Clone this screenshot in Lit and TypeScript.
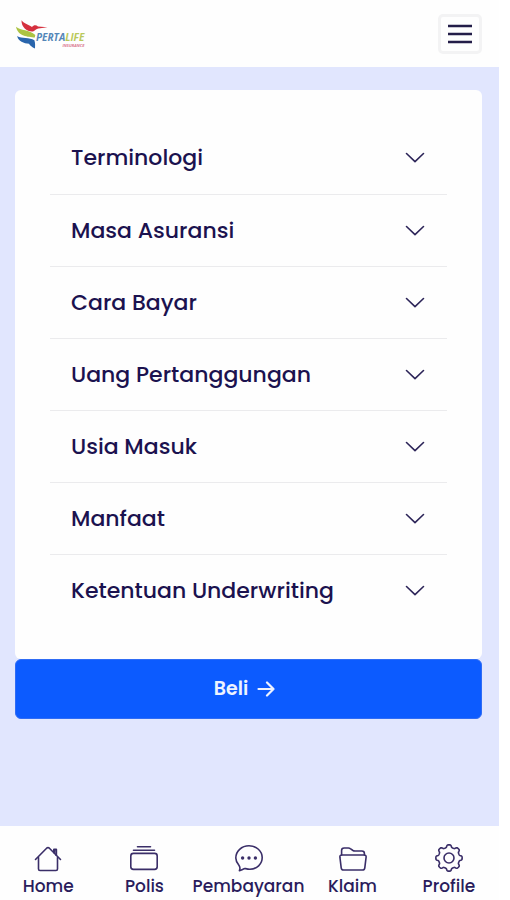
import { LitElement, html, css, svg } from "lit";
import { customElement, state } from "lit/decorators.js";

const SECTIONS = [
  "Terminologi",
  "Masa Asuransi",
  "Cara Bayar",
  "Uang Pertanggungan",
  "Usia Masuk",
  "Manfaat",
  "Ketentuan Underwriting",
];

// Outline of a gear with eight soft teeth, centred in a 28 unit box.
const gearPath = (() => {
  const points: string[] = [];
  for (let i = 0; i < 160; i++) {
    const a = (i / 160) * Math.PI * 2;
    const r = 11.9 + 1.3 * Math.tanh(2.2 * Math.cos(8 * a));
    points.push(`${(14 + r * Math.sin(a)).toFixed(2)} ${(14 - r * Math.cos(a)).toFixed(2)}`);
  }
  return `M${points.join("L")}Z`;
})();

const NAV = [
  {
    label: "Home",
    icon: svg`<path d="M4.5 13.5V25q0 1.5 1.5 1.5h16q1.5 0 1.5-1.5V13.5"/><path d="M1.5 15.5 12.6 4.2q1.4-1.2 2.8 0L26.5 15.5"/><path d="M20 8.5V5.5h2.2v5.4" stroke-width="2"/>`,
  },
  {
    label: "Polis",
    icon: svg`<rect x="0.8" y="9.4" width="26.4" height="16" rx="2.6"/><path d="M3.5 6.2h21M7.5 2.7h13"/>`,
  },
  {
    label: "Pembayaran",
    icon: svg`<path d="M4.4 26.6c.9-2 .8-3.6-.5-5.4C1.8 18.8.8 16.7.8 14 .8 7.2 6.6 1.8 14 1.8S27.2 7 27.2 13.6 21.8 25.2 14.8 25.2c-2 0-3.4-.4-4.8-.7-1.8.5-3.5 1.6-5.6 2.1Z"/><g class="dots"><circle cx="7.6" cy="14" r="1.7"/><circle cx="14" cy="14" r="1.7"/><circle cx="20.4" cy="14" r="1.7"/></g>`,
  },
  {
    label: "Klaim",
    icon: svg`<path d="M2.6 11V6.5q0-2.5 2.5-2.5h4.4q1 0 1.8.6l2.7 1.9q.8.5 1.8.5h7.100q2.5 0 2.5 2.5V11"/><path d="M3 11h22q2.3 0 2.1 2.2l-1.3 10.6q-.3 2.2-2.5 2.2H4.7q-2.2 0-2.5-2.2L.9 13.2Q.7 11 3 11Z"/>`,
  },
  {
    label: "Profile",
    icon: svg`<path d="${gearPath}"/><circle cx="14" cy="14" r="5"/>`,
  },
];

@customElement("app-header")
class AppHeader extends LitElement {
  static styles = css`
    :host {
      display: block;
    }
    .bar {
      box-sizing: border-box;
      height: 67px;
      padding: 0 17px 0 14px;
      display: flex;
      align-items: center;
      justify-content: space-between;
      background: #fefefe;
    }
    .brand {
      display: flex;
      align-items: center;
      text-decoration: none;
      font-family: "Open Sans", "Noto Sans", sans-serif;
      font-style: italic;
      font-weight: 700;
    }
    .bird {
      width: 22px;
      height: 32px;
      flex: none;
      overflow: visible;
    }
    .words {
      display: flex;
      flex-direction: column;
      align-items: flex-end;
      padding-top: 12px;
    }
    .name {
      font-size: 10px;
      line-height: 12px;
      color: #5486b8;
    }
    .life {
      color: #b9c95c;
    }
    .sub {
      font-size: 4px;
      line-height: 6px;
      color: #d9758c;
    }
    .menu {
      width: 44px;
      height: 40px;
      padding: 0;
      display: grid;
      place-items: center;
      background: #fefefe;
      border: 3px solid #f3f3f4;
      border-radius: 5px;
    }
    .menu svg {
      width: 26px;
      height: 20px;
      stroke: #231d48;
      stroke-width: 2.4;
    }
  `;

  render() {
    return html`
      <header class="bar">
        <a class="brand" href="#" aria-label="PertaLife Insurance">
          <svg class="bird" viewBox="0 0 22 32" aria-hidden="true">
            <path fill="#d5303e" d="M7.5 2.2c2 3 6.5 4 10.5 6.8 1.5-1.9 4-2.200 6-.6l9.5.9-9.2 1.1c-2 .4-3.3 2.1-5.3 3C13.500 14 7.300 9.500 7.500 2.200Z"/>
            <path fill="#acc343" d="M2 8.7c4.5 4.2 13.5 2.6 19.300 8.300l-.5 2.600C14 18.600 4 18.600 2 8.700Z"/>
            <path fill="#2965ac" d="M3.2 18c4.300 3 12.500 1.200 17.200 4.200 1 3.200.7 5.300.6 8.300-3.300-1.300-4.600-2.700-6-4.700C10 25.300 4.200 23.500 3.200 18Z"/>
          </svg>
          <span class="words">
            <span class="name">PERTA<span class="life">LIFE</span></span>
            <span class="sub">INSURANCE</span>
          </span>
        </a>
        <button class="menu" type="button" aria-label="Menu">
          <svg viewBox="0 0 26 20" aria-hidden="true"><path d="M1 2h24M1 10h24M1 18h24"/></svg>
        </button>
      </header>
    `;
  }
}

@customElement("section-list")
class SectionList extends LitElement {
  @state() private open = -1;

  static styles = css`
    :host {
      display: block;
      padding: 32px 35px 33px;
      background: #fefefe;
      border-radius: 6px;
    }
    .item + .item {
      border-top: 1px solid #ebebed;
    }
    .heading {
      margin: 0;
    }
    .toggle {
      box-sizing: border-box;
      width: 100%;
      min-height: 71px;
      padding: 0 21px;
      display: flex;
      align-items: center;
      justify-content: space-between;
      border: 0;
      background: none;
      color: #1b124f;
      font: 500 22px/32px Poppins, Inter, sans-serif;
      text-align: left;
      cursor: pointer;
    }
    .item:first-child .toggle {
      min-height: 72px;
    }
    .chevron {
      width: 22px;
      height: 14px;
      flex: none;
      fill: none;
      stroke: #2c2458;
      stroke-width: 1.6;
      stroke-linecap: round;
      stroke-linejoin: round;
    }
    .flipped {
      transform: rotate(180deg);
    }
    .panel {
      margin: 0;
      padding: 0 21px 20px;
      color: #1b124f;
      font: 16px/24px Poppins, Inter, sans-serif;
    }
  `;

  render() {
    return SECTIONS.map(
      (name, i) => html`
        <div class="item">
          <h2 class="heading">
            <button
              class="toggle"
              type="button"
              aria-expanded=${this.open === i ? "true" : "false"}
              @click=${() => (this.open = this.open === i ? -1 : i)}
            >
              ${name}
              <svg class="chevron ${this.open === i ? "flipped" : ""}" viewBox="0 0 22 14" aria-hidden="true">
                <path d="M2.5 2.5 11 10.7 19.5 2.5"/>
              </svg>
            </button>
          </h2>
          ${this.open === i ? html`<p class="panel">${name}</p>` : null}
        </div>
      `
    );
  }
}

@customElement("bottom-nav")
class BottomNav extends LitElement {
  static styles = css`
    :host {
      display: block;
    }
    .nav {
      display: flex;
      padding: 18px 2px 0 0;
      background: #fefefe;
    }
    .link {
      flex: 1;
      display: flex;
      flex-direction: column;
      align-items: center;
      color: #2a1c5c;
      text-decoration: none;
      font: 500 17px/28px Poppins, Inter, sans-serif;
    }
    .icon {
      width: 28px;
      height: 28px;
      fill: none;
      stroke: #3a2e68;
      stroke-width: 1.6;
      stroke-linecap: round;
      stroke-linejoin: round;
    }
    .dots {
      fill: #3a2e68;
      stroke: none;
    }
  `;

  render() {
    return html`
      <nav class="nav">
        ${NAV.map(
          (item) => html`
            <a class="link" href="#">
              <svg class="icon" viewBox="0 0 28 28" aria-hidden="true">${item.icon}</svg>
              ${item.label}
            </a>
          `
        )}
      </nav>
    `;
  }
}

@customElement("app-root")
class AppRoot extends LitElement {
  static styles = css`
    :host {
      display: block;
      padding-right: 11px;
      background: #ffffff;
    }
    .page {
      min-height: 100vh;
      display: flex;
      flex-direction: column;
      background: #e1e6fe;
    }
    .main {
      flex: 1;
      display: flex;
      flex-direction: column;
      padding: 23px 17px 24px 15px;
    }
    .buy {
      height: 60px;
      display: flex;
      align-items: center;
      justify-content: center;
      gap: 9px;
      padding: 0 8px 0 0;
      border: 1px solid #2f6cf5;
      border-radius: 6px;
      background: #0c5bff;
      color: #eef3ff;
      font: 600 19px/28px Poppins, Inter, sans-serif;
      cursor: pointer;
    }
    .arrow {
      width: 18px;
      height: 16px;
      fill: none;
      stroke: #eef3ff;
      stroke-width: 2.2;
      stroke-linecap: round;
      stroke-linejoin: round;
    }
  `;

  render() {
    return html`
      <div class="page">
        <app-header></app-header>
        <main class="main">
          <section-list></section-list>
          <button class="buy" type="button">
            Beli
            <svg class="arrow" viewBox="0 0 18 16" aria-hidden="true">
              <path d="M1.5 8h15M10 1.5 16.5 8 10 14.5"/>
            </svg>
          </button>
        </main>
        <bottom-nav></bottom-nav>
      </div>
    `;
  }
}
